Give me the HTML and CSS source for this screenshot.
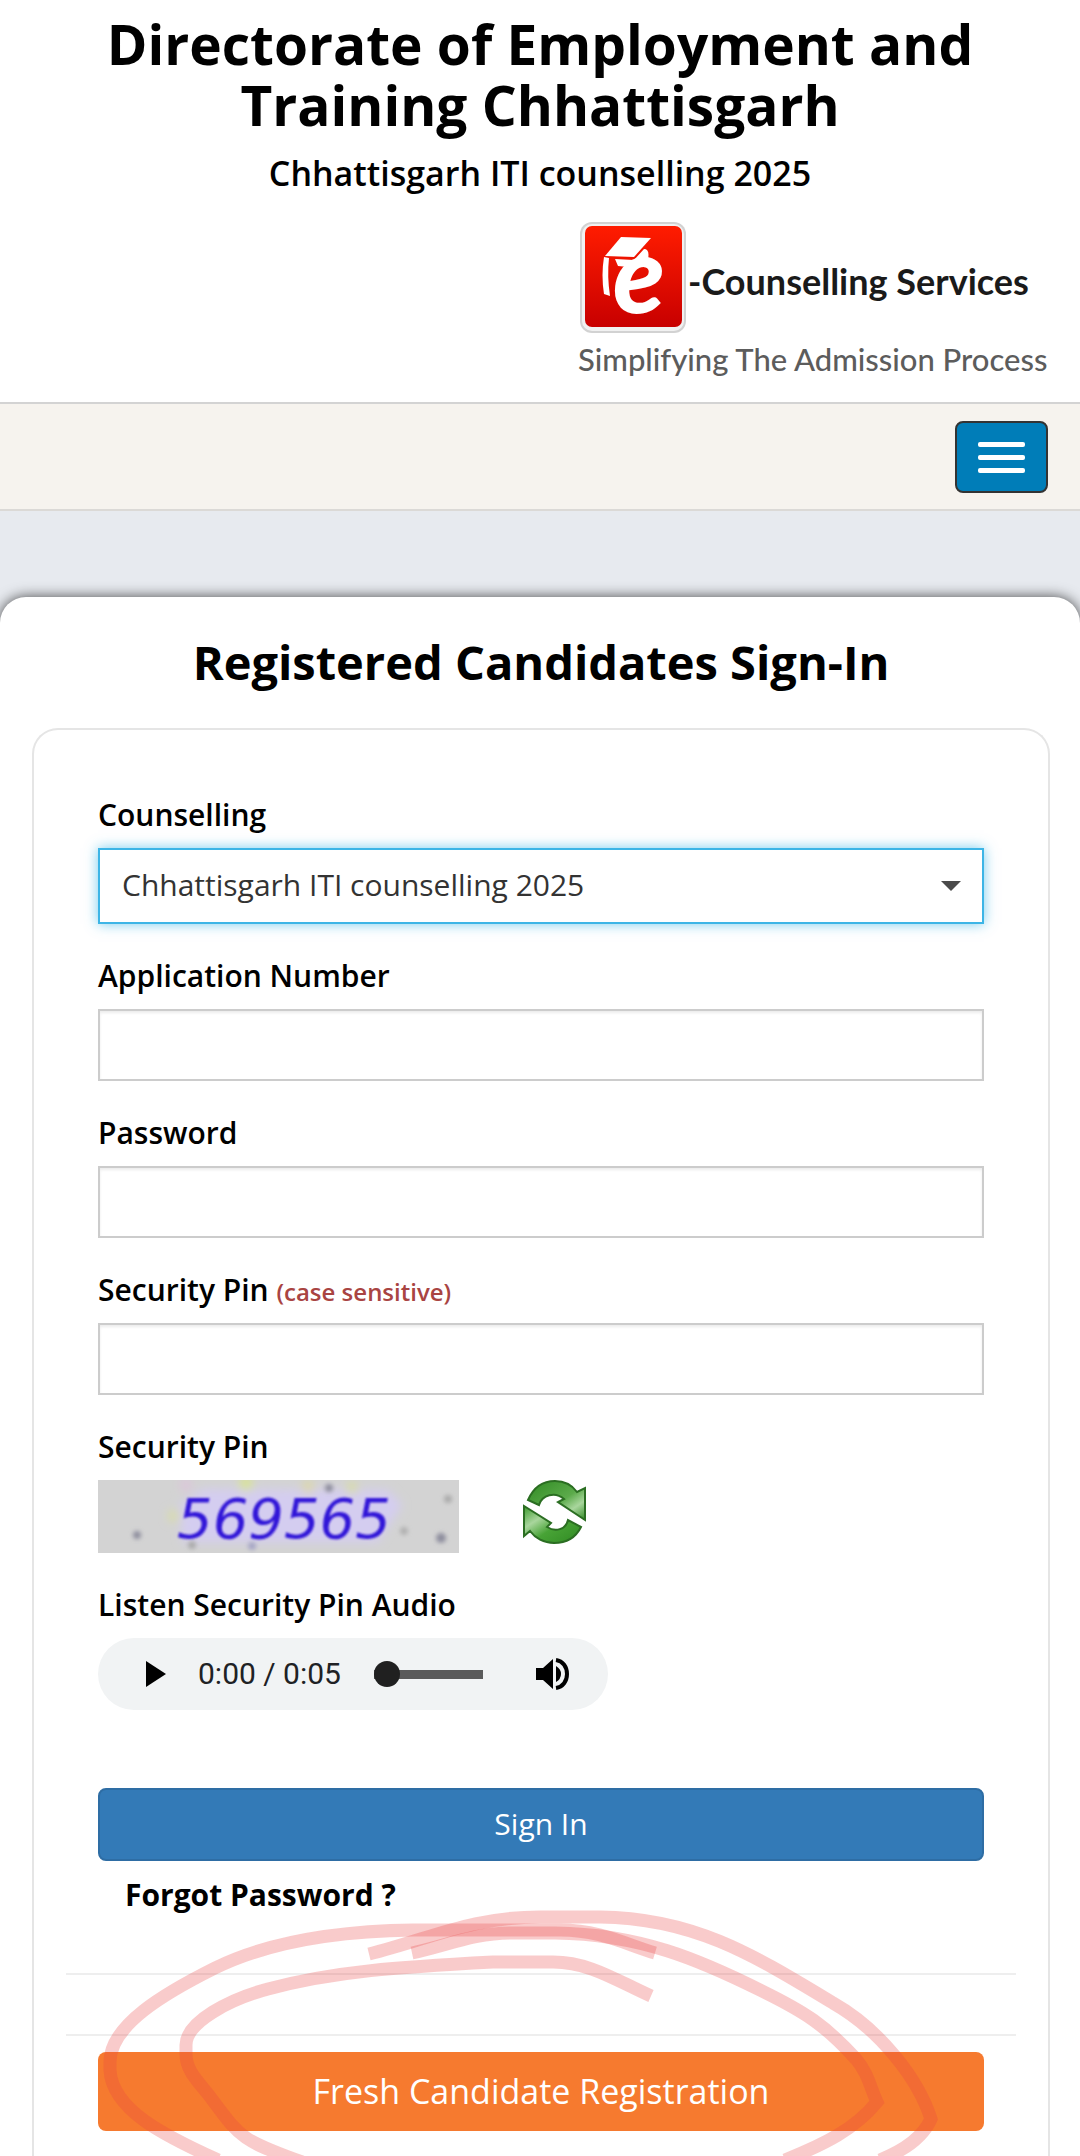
FILE: index.html
```html
<!DOCTYPE html>
<html lang="en">
<head>
    <meta charset="UTF-8">
    <meta name="viewport" content="width=device-width, initial-scale=1.0">
    <title>Directorate of Employment and Training Chhattisgarh</title>
    <link rel="stylesheet" href="styles.css">
</head>
<body>
    <header class="header">
        <h1>Directorate of Employment and Training Chhattisgarh</h1>
        <p class="subtitle">Chhattisgarh ITI counselling 2025</p>
        <div class="logo">
            <div class="logo-row">
                <svg class="logo-mark" viewBox="0 0 110 114" aria-hidden="true">
                    <defs>
                        <linearGradient id="redFill" x1="0" y1="0" x2="0" y2="1">
                            <stop offset="0" stop-color="#ff1c00"/>
                            <stop offset="1" stop-color="#c80000"/>
                        </linearGradient>
                    </defs>
                    <rect x="2" y="1" width="106" height="111" rx="12" fill="#d2d2d2"/>
                    <rect x="4" y="3" width="102" height="107" rx="10" fill="#f1f1f1"/>
                    <rect x="7" y="5" width="97" height="101" rx="7" fill="url(#redFill)"/>
                    <path d="M43 16 L73 17 L56 36 L27 35 Z" fill="#fff"/>
                    <path d="M26 36 L31 37 Q29 55 32 75 L26 73 Q23 54 26 36 Z" fill="#fff"/>
                    <path d="M37 38 L56 39 L66 28 Q72 28 70 38 Q58 38 50 46 L40 45 Z" fill="#fff"/>
                    <text class="logo-e" x="35" y="92">e</text>
                </svg>
                <span class="logo-name">-Counselling Services</span>
            </div>
            <div class="logo-tagline">Simplifying The Admission Process</div>
        </div>
    </header>

    <nav class="navbar">
        <button type="button" class="menu-btn" aria-label="Toggle navigation">
            <span class="bar"></span>
            <span class="bar"></span>
            <span class="bar"></span>
        </button>
    </nav>

    <main class="card">
        <h2>Registered Candidates Sign-In</h2>
        <form class="panel" onsubmit="return false">
            <div class="field">
                <label for="counselling">Counselling</label>
                <div class="select-wrap">
                    <select id="counselling" class="control selected">
                        <option>Chhattisgarh ITI counselling 2025</option>
                    </select>
                    <span class="caret"></span>
                </div>
            </div>
            <div class="field">
                <label for="appNumber">Application Number</label>
                <input type="text" id="appNumber" class="control">
            </div>
            <div class="field">
                <label for="password">Password</label>
                <input type="password" id="password" class="control">
            </div>
            <div class="field">
                <label for="securityPin">Security Pin <span class="hint">(case sensitive)</span></label>
                <input type="text" id="securityPin" class="control">
            </div>
            <div class="field">
                <span class="label">Security Pin</span>
                <div class="captcha-row">
                    <svg class="captcha" viewBox="0 0 361 73">
                        <defs>
                            <filter id="soft"><feGaussianBlur stdDeviation="5"/></filter>
                            <filter id="ink"><feGaussianBlur stdDeviation="1"/></filter>
                            <filter id="speck"><feGaussianBlur stdDeviation="2"/></filter>
                        </defs>
                        <rect width="361" height="73" fill="#d3d3d3"/>
                        <g filter="url(#soft)">
                            <path d="M82 24 L105 9 L290 10 L304 25 L280 62 L84 62 Z" fill="#d4cdf0"/>
                            <circle cx="76" cy="36" r="6" fill="#d9dda9"/>
                            <circle cx="88" cy="5" r="6" fill="#ddc4dc"/>
                            <circle cx="148" cy="4" r="7" fill="#d9e58d"/>
                            <circle cx="210" cy="7" r="6" fill="#ded99e"/>
                            <circle cx="254" cy="8" r="6" fill="#d9dea0"/>
                        </g>
                        <g fill="#8d8d9d" filter="url(#speck)">
                            <circle cx="39" cy="55" r="4"/>
                            <circle cx="231" cy="8" r="4"/>
                            <circle cx="350" cy="19" r="4" fill="#aaa"/>
                            <circle cx="343" cy="58" r="5"/>
                            <circle cx="306" cy="51" r="4" fill="#b0b0b0"/>
                            <circle cx="94" cy="65" r="4" fill="#aaa"/>
                            <circle cx="154" cy="66" r="4" fill="#a5a5c5"/>
                        </g>
                        <text class="captcha-text" x="79" y="58" filter="url(#ink)">569565</text>
                    </svg>
                    <button type="button" class="refresh-btn" aria-label="Refresh security pin">
                        <svg viewBox="0 0 63 64">
                            <defs>
                                <linearGradient id="greenTop" x1="0" y1="0" x2="1" y2="1">
                                    <stop offset="0" stop-color="#2f8a22"/>
                                    <stop offset=".55" stop-color="#5cab4b"/>
                                    <stop offset=".75" stop-color="#a9d69d"/>
                                    <stop offset="1" stop-color="#2f8a22"/>
                                </linearGradient>
                                <linearGradient id="greenBottom" x1="0" y1="0" x2="1" y2="1">
                                    <stop offset="0" stop-color="#3c9a2c"/>
                                    <stop offset=".3" stop-color="#a9d69d"/>
                                    <stop offset=".55" stop-color="#48a336"/>
                                    <stop offset="1" stop-color="#2f8a22"/>
                                </linearGradient>
                            </defs>
                            <path d="M5 20 C12 4 24 1 32 1 C42 1 49 5 54 12 L62 8 L62 40 L35 22 L41 19 C32 11 19 15 16 25 Z" fill="url(#greenTop)" stroke="#2b6e22" stroke-width="2"/>
                            <path d="M58 47 C52 59 41 63 31 63 C21 63 12 58 7 51 L1 56 L1 26 L28 43 L24 47 C32 52 43 50 45 40 Z" fill="url(#greenBottom)" stroke="#2b6e22" stroke-width="2"/>
                        </svg>
                    </button>
                </div>
            </div>
            <div class="field">
                <label for="seek">Listen Security Pin Audio</label>
                <div class="player">
                    <button type="button" class="player-btn play" aria-label="Play">
                        <svg viewBox="0 0 20 26"><path d="M0 0 L20 13 L0 26 Z"/></svg>
                    </button>
                    <span class="time">0:00 / 0:05</span>
                    <input type="range" id="seek" class="seek" min="0" max="5" value="0">
                    <button type="button" class="player-btn volume" aria-label="Mute">
                        <svg viewBox="0 0 34 34">
                            <path d="M0 11 H7 L17 2 V32 L7 23 H0 Z"/>
                            <path d="M20 9 Q25 12 25 17 Q25 22 20 25 Z"/>
                            <path d="M20 3 C27 4 31 10 31 17 C31 24 27 30 20 31" fill="none" stroke="#000" stroke-width="4"/>
                        </svg>
                    </button>
                </div>
            </div>

            <button type="submit" class="btn btn-primary">Sign In</button>
            <a href="#" class="forgot">Forgot Password ?</a>
            <hr>
            <hr>
            <div class="register">
                <button type="button" class="btn btn-register">Fresh Candidate Registration</button>
                <!-- marker rings round the registration button -->
                <svg class="marker" viewBox="98 1910 886 250" aria-hidden="true">
                    <path d="M655 1953 C625 1944 600 1930 560 1930 L413 1930 C340 1931 270 1941 215 1968 C165 1993 110 2025 110 2062 L110 2070 C112 2110 165 2136 218 2160 M651 1996 C617 1981 590 1962 553 1962 L493 1962 C400 1967 335 1971 268 1989 C230 1999 186 2022 186 2045 L186 2054 C186 2072 200 2083 211 2098 C240 2137 240 2140 302 2162"/>
                    <path d="M412 1953 C445 1946 475 1933 510 1933 L555 1933 C640 1934 700 1960 762 1991 C805 2012 825 2025 856 2059 C868 2073 870 2087 877 2102 C855 2129 825 2144 785 2160"/>
                    <path d="M369 1954 C430 1939 470 1917 540 1917 L600 1917 C695 1918 755 1956 833 2003 C879 2029 918 2078 931 2119 C923 2137 905 2150 880 2160"/>
                </svg>
            </div>
        </form>
    </main>
</body>
</html>
```

FILE: styles.css
```css
* {
    box-sizing: border-box;
}
body {
    display: flex;
    flex-direction: column;
    min-height: 100vh;
    margin: 0;
    background-color: #e7eaef;
    color: #000;
    font-family: "Open Sans", sans-serif;
    font-size: 30px;
    line-height: 42px;
    overflow: hidden;
}
.header {
    padding: 13px 32px 22px;
    background-color: #fff;
}
h1 {
    margin: 0;
    font-size: 55px;
    line-height: 61px;
    text-align: center;
}
.subtitle {
    margin: 14px 0 24px;
    font-size: 34px;
    font-weight: 600;
    line-height: 48px;
    text-align: center;
}
.logo {
    display: flex;
    flex-direction: column;
    gap: 3px;
    width: 470px;
    margin-left: auto;
    font-family: Lato, sans-serif;
    white-space: nowrap;
}
.logo-row {
    display: flex;
    align-items: center;
}
.logo-mark {
    width: 110px;
    height: 114px;
    overflow: visible;
}
.logo-e {
    fill: #fff;
    font-family: Lato, sans-serif;
    font-size: 106px;
    font-style: italic;
    font-weight: 900;
}
.logo-name {
    padding-top: 6px;
    color: #1a1a1a;
    font-size: 36px;
    font-weight: 700;
}
.logo-tagline {
    color: #5c5c5c;
    font-size: 31px;
    font-weight: 500;
}
.navbar {
    display: flex;
    justify-content: flex-end;
    padding: 17px 32px 16px;
    background-color: #f6f3ee;
    border-top: 2px solid #d3d3d3;
    border-bottom: 2px solid #dbd9d6;
}
.menu-btn {
    display: flex;
    flex-direction: column;
    align-items: center;
    justify-content: center;
    gap: 8px;
    width: 93px;
    height: 72px;
    padding: 0;
    background-color: #007db8;
    border: 2px solid #333;
    border-radius: 8px;
    cursor: pointer;
}
.bar {
    width: 47px;
    height: 5px;
    background-color: #fff;
    border-radius: 2px;
}
.card {
    display: flex;
    flex: 1;
    flex-direction: column;
    margin-top: 86px;
    padding: 31px 30px 0 32px;
    background-color: #fff;
    border-radius: 26px 26px 0 0;
    box-shadow: 0 0 14px rgba(0, 0, 0, 0.7);
}
h2 {
    margin: 0 0 32px;
    font-size: 47px;
    line-height: 68px;
    text-align: center;
}
.panel {
    display: flex;
    flex: 1;
    flex-direction: column;
    padding: 64px 64px 25px;
    border: 2px solid #e5e5e5;
    border-bottom: 0;
    border-radius: 26px 26px 0 0;
}
.field {
    margin-bottom: 31px;
}
.field label,
.label {
    display: block;
    margin-bottom: 12px;
    font-weight: 600;
}
.hint {
    color: #a94442;
    font-size: 24px;
    line-height: 1;
}
.control {
    display: block;
    width: 100%;
    height: 72px;
    padding: 0 22px;
    background-color: #fff;
    border: 2px solid #ccc;
    border-radius: 0;
    box-shadow: inset 0 2px 3px rgba(0, 0, 0, 0.08);
    color: #333;
    font-family: inherit;
    font-size: 30px;
    outline: none;
}
.select-wrap {
    position: relative;
}
select.control {
    height: 76px;
    padding-bottom: 4px;
    appearance: none;
}
.selected {
    border-color: #3db5e6;
    box-shadow: 0 0 12px rgba(61, 181, 230, 0.7);
}
.caret {
    position: absolute;
    top: 33px;
    right: 23px;
    border: 10px solid transparent;
    border-top-color: #4a4a4a;
    border-bottom: 0;
    pointer-events: none;
}
.captcha-row {
    display: flex;
    gap: 64px;
}
.captcha {
    width: 361px;
    height: 73px;
}
.captcha-text {
    fill: #3216d8;
    font-family: "DejaVu Sans", sans-serif;
    font-size: 56px;
    font-style: italic;
}
.refresh-btn {
    width: 63px;
    height: 64px;
    padding: 0;
    background: none;
    border: 0;
    cursor: pointer;
}
.refresh-btn svg,
.player-btn svg {
    display: block;
    width: 100%;
    height: 100%;
}
.player {
    display: flex;
    align-items: center;
    width: 510px;
    height: 72px;
    padding: 0 38px 0 48px;
    background-color: #f1f3f4;
    border-radius: 36px;
}
.player-btn {
    padding: 0;
    background: none;
    border: 0;
    cursor: pointer;
}
.play {
    width: 20px;
    height: 26px;
}
.volume {
    width: 34px;
    height: 34px;
}
.time {
    margin: 0 auto 0 32px;
    color: #202124;
    font-family: Roboto, sans-serif;
    font-size: 30px;
}
.seek {
    width: 109px;
    height: 28px;
    margin: 0 53px 0 0;
    background: linear-gradient(#5a5a5a, #5a5a5a) center / 100% 9px no-repeat;
    border-radius: 5px;
    appearance: none;
}
.seek::-webkit-slider-thumb {
    width: 26px;
    height: 26px;
    background-color: #202020;
    border-radius: 50%;
    appearance: none;
}
.btn {
    display: block;
    width: 100%;
    padding: 0 0 2px;
    border-radius: 8px;
    color: #fff;
    font-family: inherit;
    cursor: pointer;
}
.btn-primary {
    height: 73px;
    margin-top: 47px;
    background-color: #337ab7;
    border: 2px solid #2e6da4;
    font-size: 30px;
}
.forgot {
    align-self: flex-start;
    margin: 13px 0 57px 27px;
    color: #000;
    font-weight: 700;
    text-decoration: none;
}
hr {
    align-self: stretch;
    margin: 0 -32px 59px;
    border: 0;
    border-top: 2px solid #eee;
}
hr + hr {
    margin-bottom: 16px;
}
.register {
    position: relative;
}
.btn-register {
    height: 79px;
    background-color: #f67a2f;
    border: 0;
    font-size: 34px;
}
.marker {
    position: absolute;
    top: -142px;
    left: 0;
    width: 100%;
    fill: none;
    stroke: #eb4444;
    stroke-width: 13px;
    overflow: visible;
    pointer-events: none;
}
.marker path {
    stroke-opacity: 0.28;
}
```
